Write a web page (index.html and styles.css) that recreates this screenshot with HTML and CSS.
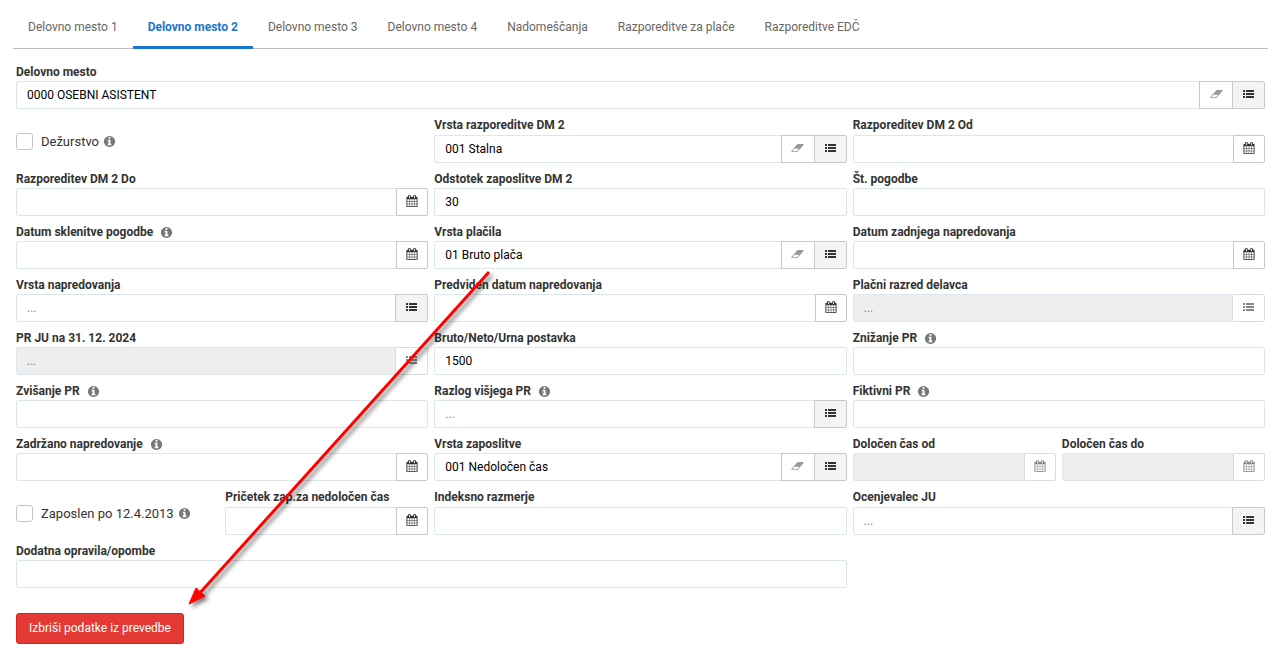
FILE: index.html
```html
<!DOCTYPE html>
<html lang="sl">
<head>
    <meta charset="UTF-8">
    <meta name="viewport" content="width=device-width, initial-scale=1.0">
    <title>Delovno mesto 2</title>
    <link rel="stylesheet" href="styles.css">
</head>
<body>
    <!-- icons -->
    <svg class="sprite" aria-hidden="true">
        <symbol id="list" viewBox="0 0 11 12">
            <path d="M0 2h2v2H0zM3 2h8v2H3zM0 5h2v2H0zM3 5h8v2H3zM0 8h2v2H0zM3 8h8v2H3z"/>
        </symbol>
        <symbol id="eraser" viewBox="0 0 2048 1792">
            <path d="M960 1408l336-384h-768l-336 384h768zm1013-1077q15 34 9.500 71.500t-30.500 65.500l-896 1024q-38 44-96 44h-768q-38 0-69.500-20.500t-47.500-54.500q-15-34-9.500-71.500t30.500-65.500l896-1024q38-44 96-44h768q38 0 69.500 20.500t47.500 54.500z"/>
        </symbol>
        <symbol id="calendar" viewBox="0 0 1792 1792">
            <path d="M192 1664h288v-288h-288v288zm352 0h320v-288h-320v288zm-352-352h288v-320h-288v320zm352 0h320v-320h-320v320zm-352-384h288v-288h-288v288zm736 736h320v-288h-320v288zm-384-736h320v-288h-320v288zm768 736h288v-288h-288v288zm-384-352h320v-320h-320v320zm-352-864v-288q0-13-9.500-22.500t-22.500-9.500h-64q-13 0-22.500 9.500t-9.500 22.500v288q0 13 9.500 22.500t22.500 9.500h64q13 0 22.500-9.500t9.500-22.500zm736 864h288v-320h-288v320zm-384-384h320v-288h-320v288zm384 0h288v-288h-288v288zm32-480v-288q0-13-9.500-22.500t-22.500-9.500h-64q-13 0-22.500 9.500t-9.500 22.500v288q0 13 9.500 22.500t22.500 9.500h64q13 0 22.500-9.500t9.500-22.500zm384-64v1280q0 52-38 90t-90 38h-1408q-52 0-90-38t-38-90v-1280q0-52 38-90t90-38h128v-96q0-66 47-113t113-47h64q66 0 113 47t47 113v96h384v-96q0-66 47-113t113-47h64q66 0 113 47t47 113v96h128q52 0 90 38t38 90z"/>
        </symbol>
        <symbol id="info" viewBox="0 0 1792 1792">
            <path d="M1152 1376v-160q0-14-9-23t-23-9h-96v-512q0-14-9-23t-23-9h-320q-14 0-23 9t-9 23v160q0 14 9 23t23 9h96v320h-96q-14 0-23 9t-9 23v160q0 14 9 23t23 9h448q14 0 23-9t9-23zm-128-896v-160q0-14-9-23t-23-9h-192q-14 0-23 9t-9 23v160q0 14 9 23t23 9h192q14 0 23-9t9-23zm640 416q0 209-103 385.500t-279.500 279.500-385.500 103-385.500-103-279.500-279.500-103-385.500 103-385.500 279.500-279.500 385.500-103 385.500 103 279.500 279.500 103 385.500z"/>
        </symbol>
    </svg>

    <nav class="tabs">
        <a href="#dm1">Delovno mesto 1</a>
        <a href="#dm2" class="active">Delovno mesto 2</a>
        <a href="#dm3">Delovno mesto 3</a>
        <a href="#dm4">Delovno mesto 4</a>
        <a href="#nadomescanja">Nadomeščanja</a>
        <a href="#place">Razporeditve za plače</a>
        <a href="#edc">Razporeditve EDČ</a>
    </nav>

    <form class="form">
        <div class="fields">
            <div class="field full">
                <label for="delovnoMesto">Delovno mesto</label>
                <div class="group">
                    <input type="text" id="delovnoMesto" value="0000 OSEBNI ASISTENT">
                    <button type="button" class="clear" aria-label="Počisti"><svg><use href="#eraser"/></svg></button>
                    <button type="button" class="pick" aria-label="Izberi"><svg><use href="#list"/></svg></button>
                </div>
            </div>

            <div class="check wide">
                <input type="checkbox" id="dezurstvo">
                <label for="dezurstvo">Dežurstvo</label>
                <svg class="info"><use href="#info"/></svg>
            </div>
            <div class="field wide">
                <label for="vrstaRazporeditve">Vrsta razporeditve DM 2</label>
                <div class="group">
                    <input type="text" id="vrstaRazporeditve" value="001 Stalna">
                    <button type="button" class="clear" aria-label="Počisti"><svg><use href="#eraser"/></svg></button>
                    <button type="button" class="pick" aria-label="Izberi"><svg><use href="#list"/></svg></button>
                </div>
            </div>
            <div class="field wide">
                <label for="razporeditevOd">Razporeditev DM 2 Od</label>
                <div class="group">
                    <input type="text" id="razporeditevOd">
                    <button type="button" class="date" aria-label="Koledar"><svg><use href="#calendar"/></svg></button>
                </div>
            </div>

            <div class="field wide">
                <label for="razporeditevDo">Razporeditev DM 2 Do</label>
                <div class="group">
                    <input type="text" id="razporeditevDo">
                    <button type="button" class="date" aria-label="Koledar"><svg><use href="#calendar"/></svg></button>
                </div>
            </div>
            <div class="field wide">
                <label for="odstotek">Odstotek zaposlitve DM 2</label>
                <div class="group"><input type="text" id="odstotek" value="30"></div>
            </div>
            <div class="field wide">
                <label for="stPogodbe">Št. pogodbe</label>
                <div class="group"><input type="text" id="stPogodbe"></div>
            </div>

            <div class="field wide">
                <label for="datumSklenitve">Datum sklenitve pogodbe <svg class="info"><use href="#info"/></svg></label>
                <div class="group">
                    <input type="text" id="datumSklenitve">
                    <button type="button" class="date" aria-label="Koledar"><svg><use href="#calendar"/></svg></button>
                </div>
            </div>
            <div class="field wide">
                <label for="vrstaPlacila">Vrsta plačila</label>
                <div class="group">
                    <input type="text" id="vrstaPlacila" value="01 Bruto plača">
                    <button type="button" class="clear" aria-label="Počisti"><svg><use href="#eraser"/></svg></button>
                    <button type="button" class="pick" aria-label="Izberi"><svg><use href="#list"/></svg></button>
                </div>
            </div>
            <div class="field wide">
                <label for="datumZadnjega">Datum zadnjega napredovanja</label>
                <div class="group">
                    <input type="text" id="datumZadnjega">
                    <button type="button" class="date" aria-label="Koledar"><svg><use href="#calendar"/></svg></button>
                </div>
            </div>

            <div class="field wide">
                <label for="vrstaNapredovanja">Vrsta napredovanja</label>
                <div class="group">
                    <input type="text" id="vrstaNapredovanja" placeholder="...">
                    <button type="button" class="pick" aria-label="Izberi"><svg><use href="#list"/></svg></button>
                </div>
            </div>
            <div class="field wide">
                <label for="predvidenDatum">Predviden datum napredovanja</label>
                <div class="group">
                    <input type="text" id="predvidenDatum">
                    <button type="button" class="date" aria-label="Koledar"><svg><use href="#calendar"/></svg></button>
                </div>
            </div>
            <div class="field wide">
                <label for="placniRazred">Plačni razred delavca</label>
                <div class="group">
                    <input type="text" id="placniRazred" placeholder="..." disabled>
                    <button type="button" class="pick" aria-label="Izberi" disabled><svg><use href="#list"/></svg></button>
                </div>
            </div>

            <div class="field wide">
                <label for="prJu">PR JU na 31. 12. 2024</label>
                <div class="group">
                    <input type="text" id="prJu" placeholder="..." disabled>
                    <button type="button" class="pick" aria-label="Izberi" disabled><svg><use href="#list"/></svg></button>
                </div>
            </div>
            <div class="field wide">
                <label for="postavka">Bruto/Neto/Urna postavka</label>
                <div class="group"><input type="text" id="postavka" value="1500"></div>
            </div>
            <div class="field wide">
                <label for="znizanje">Znižanje PR <svg class="info"><use href="#info"/></svg></label>
                <div class="group"><input type="text" id="znizanje"></div>
            </div>

            <div class="field wide">
                <label for="zvisanje">Zvišanje PR <svg class="info"><use href="#info"/></svg></label>
                <div class="group"><input type="text" id="zvisanje"></div>
            </div>
            <div class="field wide">
                <label for="razlog">Razlog višjega PR <svg class="info"><use href="#info"/></svg></label>
                <div class="group">
                    <input type="text" id="razlog" placeholder="...">
                    <button type="button" class="pick" aria-label="Izberi"><svg><use href="#list"/></svg></button>
                </div>
            </div>
            <div class="field wide">
                <label for="fiktivni">Fiktivni PR <svg class="info"><use href="#info"/></svg></label>
                <div class="group"><input type="text" id="fiktivni"></div>
            </div>

            <div class="field wide">
                <label for="zadrzano">Zadržano napredovanje <svg class="info"><use href="#info"/></svg></label>
                <div class="group">
                    <input type="text" id="zadrzano">
                    <button type="button" class="date" aria-label="Koledar"><svg><use href="#calendar"/></svg></button>
                </div>
            </div>
            <div class="field wide">
                <label for="vrstaZaposlitve">Vrsta zaposlitve</label>
                <div class="group">
                    <input type="text" id="vrstaZaposlitve" value="001 Nedoločen čas">
                    <button type="button" class="clear" aria-label="Počisti"><svg><use href="#eraser"/></svg></button>
                    <button type="button" class="pick" aria-label="Izberi"><svg><use href="#list"/></svg></button>
                </div>
            </div>
            <div class="field">
                <label for="casOd">Določen čas od</label>
                <div class="group">
                    <input type="text" id="casOd" disabled>
                    <button type="button" class="date" aria-label="Koledar" disabled><svg><use href="#calendar"/></svg></button>
                </div>
            </div>
            <div class="field">
                <label for="casDo">Določen čas do</label>
                <div class="group">
                    <input type="text" id="casDo" disabled>
                    <button type="button" class="date" aria-label="Koledar" disabled><svg><use href="#calendar"/></svg></button>
                </div>
            </div>

            <div class="check">
                <input type="checkbox" id="zaposlenPo">
                <label for="zaposlenPo">Zaposlen po 12.4.2013</label>
                <svg class="info"><use href="#info"/></svg>
            </div>
            <div class="field">
                <label for="pricetek">Pričetek zap.za nedoločen čas</label>
                <div class="group">
                    <input type="text" id="pricetek">
                    <button type="button" class="date" aria-label="Koledar"><svg><use href="#calendar"/></svg></button>
                </div>
            </div>
            <div class="field wide">
                <label for="indeksno">Indeksno razmerje</label>
                <div class="group"><input type="text" id="indeksno"></div>
            </div>
            <div class="field wide">
                <label for="ocenjevalec">Ocenjevalec JU</label>
                <div class="group">
                    <input type="text" id="ocenjevalec" placeholder="...">
                    <button type="button" class="pick" aria-label="Izberi"><svg><use href="#list"/></svg></button>
                </div>
            </div>

            <div class="field double">
                <label for="opombe">Dodatna opravila/opombe</label>
                <div class="group"><input type="text" id="opombe"></div>
            </div>
        </div>

        <button type="button" class="delete">Izbriši podatke iz prevedbe</button>
    </form>

    <!-- arrow pointing at the delete button -->
    <svg class="arrow" viewBox="0 0 320 350" aria-hidden="true">
        <path d="M309 12L19 334" stroke="#f00" stroke-width="3" fill="none"/>
        <path d="M9 344L16 328L25 336Z" fill="#f00" stroke="#f00"/>
    </svg>
</body>
</html>
```
FILE: styles.css
```css
* {
    box-sizing: border-box;
}

body {
    position: relative;
    margin: 0;
    background-color: #fff;
    color: #333;
    font-family: Roboto, "Liberation Sans", sans-serif;
    font-size: 12px;
}

.sprite {
    display: none;
}

/* tabs */
.tabs {
    display: flex;
    height: 49px;
    margin: 0 8px 0 13px;
    border-bottom: 1px solid #bbb;
}

.tabs a {
    height: 49px;
    padding: 18px 15px 0;
    line-height: 18px;
    color: #666;
    text-decoration: none;
}

.tabs a.active {
    color: #1976d2;
    font-weight: bold;
    border-bottom: 3px solid #1976d2;
}

/* form */
.form {
    padding: 14px 11px 11px 16px;
}

.fields {
    display: grid;
    grid-template-columns: repeat(6, minmax(0, 1fr));
    gap: 7px 6px;
}

.wide {
    grid-column: span 2;
}

.double {
    grid-column: span 4;
}

.full {
    grid-column: span 6;
}

.field {
    display: flex;
    flex-direction: column;
    justify-content: space-between;
}

.field label {
    display: flex;
    align-items: center;
    gap: 7px;
    height: 18px;
    font-weight: bold;
    white-space: nowrap;
}

.info {
    width: 13px;
    height: 13px;
    fill: #777;
}

.group {
    display: flex;
    height: 28px;
}

.group input {
    flex: 1;
    min-width: 0;
    padding: 0 10px;
    border: 1px solid #dce6ee;
    border-radius: 2px;
    background-color: #fff;
    color: #000;
    font: inherit;
}

.group input::placeholder {
    color: #888;
    opacity: 1;
}

.group input:disabled {
    background-color: #eee;
}

.group button {
    display: flex;
    justify-content: center;
    align-items: center;
    width: 34px;
    margin-left: -1px;
    padding: 0 0 2px;
    border: 1px solid #c8c8c8;
    background-color: #fff;
    cursor: pointer;
}

.group button:last-child {
    border-radius: 0 2px 2px 0;
}

.group svg {
    width: 12px;
    height: 12px;
    fill: #333;
}

.group .date {
    width: 32px;
}

.group .pick {
    width: 33px;
    background-color: #f4f4f4;
}

.group .pick svg {
    width: 11px;
}

.group .clear svg {
    width: 13px;
    fill: #999;
}

.group button:disabled {
    border-color: #dcdcdc;
    background-color: #fff;
}

.group button:disabled svg {
    fill: #888;
}

.check {
    display: flex;
    align-items: center;
    height: 47px;
    padding-top: 4px;
    font-size: 13px;
}

.check input {
    appearance: none;
    width: 17px;
    height: 17px;
    margin: 0 8px 0 0;
    border: 1px solid #c4c4c4;
    border-radius: 3px;
    background-color: #fff;
}

.check input:checked {
    background-color: #1976d2;
}

.check label {
    margin-right: 4px;
}

.delete {
    height: 31px;
    margin-top: 25px;
    padding: 0 12px 2px;
    border: 1px solid #d32020;
    border-radius: 3px;
    background-color: #e53935;
    color: #fff;
    font: inherit;
    cursor: pointer;
}

.arrow {
    position: absolute;
    left: 180px;
    top: 260px;
    width: 320px;
    height: 350px;
    pointer-events: none;
    filter: drop-shadow(3px 3px 2px rgba(0, 0, 0, 0.5));
}
```
